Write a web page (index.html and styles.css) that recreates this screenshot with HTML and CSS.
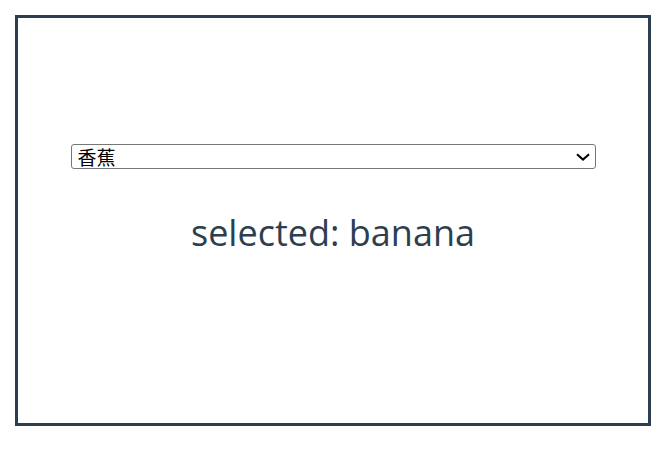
FILE: index.html
```html
<!DOCTYPE html>
<html lang="en">
<head>
<meta charset="utf-8">
<title>Select</title>
<link rel="stylesheet" href="styles.css">
</head>
<body>
<div class="frame">
  <div class="app">
    <div class="picker-wrap">
      <select class="picker">
        <option value="apple">苹果</option>
        <option value="banana" selected>香蕉</option>
        <option value="orange">橙子</option>
      </select>
      <svg class="chevron" width="14" height="8" viewBox="0 0 14 8" aria-hidden="true">
        <path d="M1 1.2 L7 6.6 L13 1.2" fill="none" stroke="#000" stroke-width="2"/>
      </svg>
    </div>
    <p class="result">selected: banana</p>
  </div>
</div>
</body>
</html>
```

FILE: styles.css
```css
html, body {
  margin: 0;
  padding: 0;
  background: #ffffff;
}
body {
  padding: 15px 0 0 15px;
}
.frame {
  box-sizing: border-box;
  width: 636px;
  height: 411px;
  border: 3px solid #2c3e50;
  display: flex;
  align-items: center;
  justify-content: center;
}
.app {
  display: flex;
  flex-direction: column;
  align-items: center;
  margin-top: -44px;
}
.picker-wrap {
  position: relative;
  width: 525px;
  height: 25px;
}
.picker {
  -webkit-appearance: none;
  appearance: none;
  box-sizing: border-box;
  width: 100%;
  height: 25px;
  margin: 0;
  font-family: "Noto Sans CJK SC", sans-serif;
  font-size: 19px;
  line-height: 23px;
  color: #000;
  background: #fff;
  border: 1px solid #767676;
  border-radius: 3px;
  padding: 0 24px 0 6px;
}
.chevron {
  position: absolute;
  right: 6px;
  top: 9px;
  pointer-events: none;
}
.result {
  margin: 44px 0 0 0;
  font-family: "Open Sans", sans-serif;
  font-size: 36px;
  line-height: 40px;
  color: #2c3e50;
}
```
